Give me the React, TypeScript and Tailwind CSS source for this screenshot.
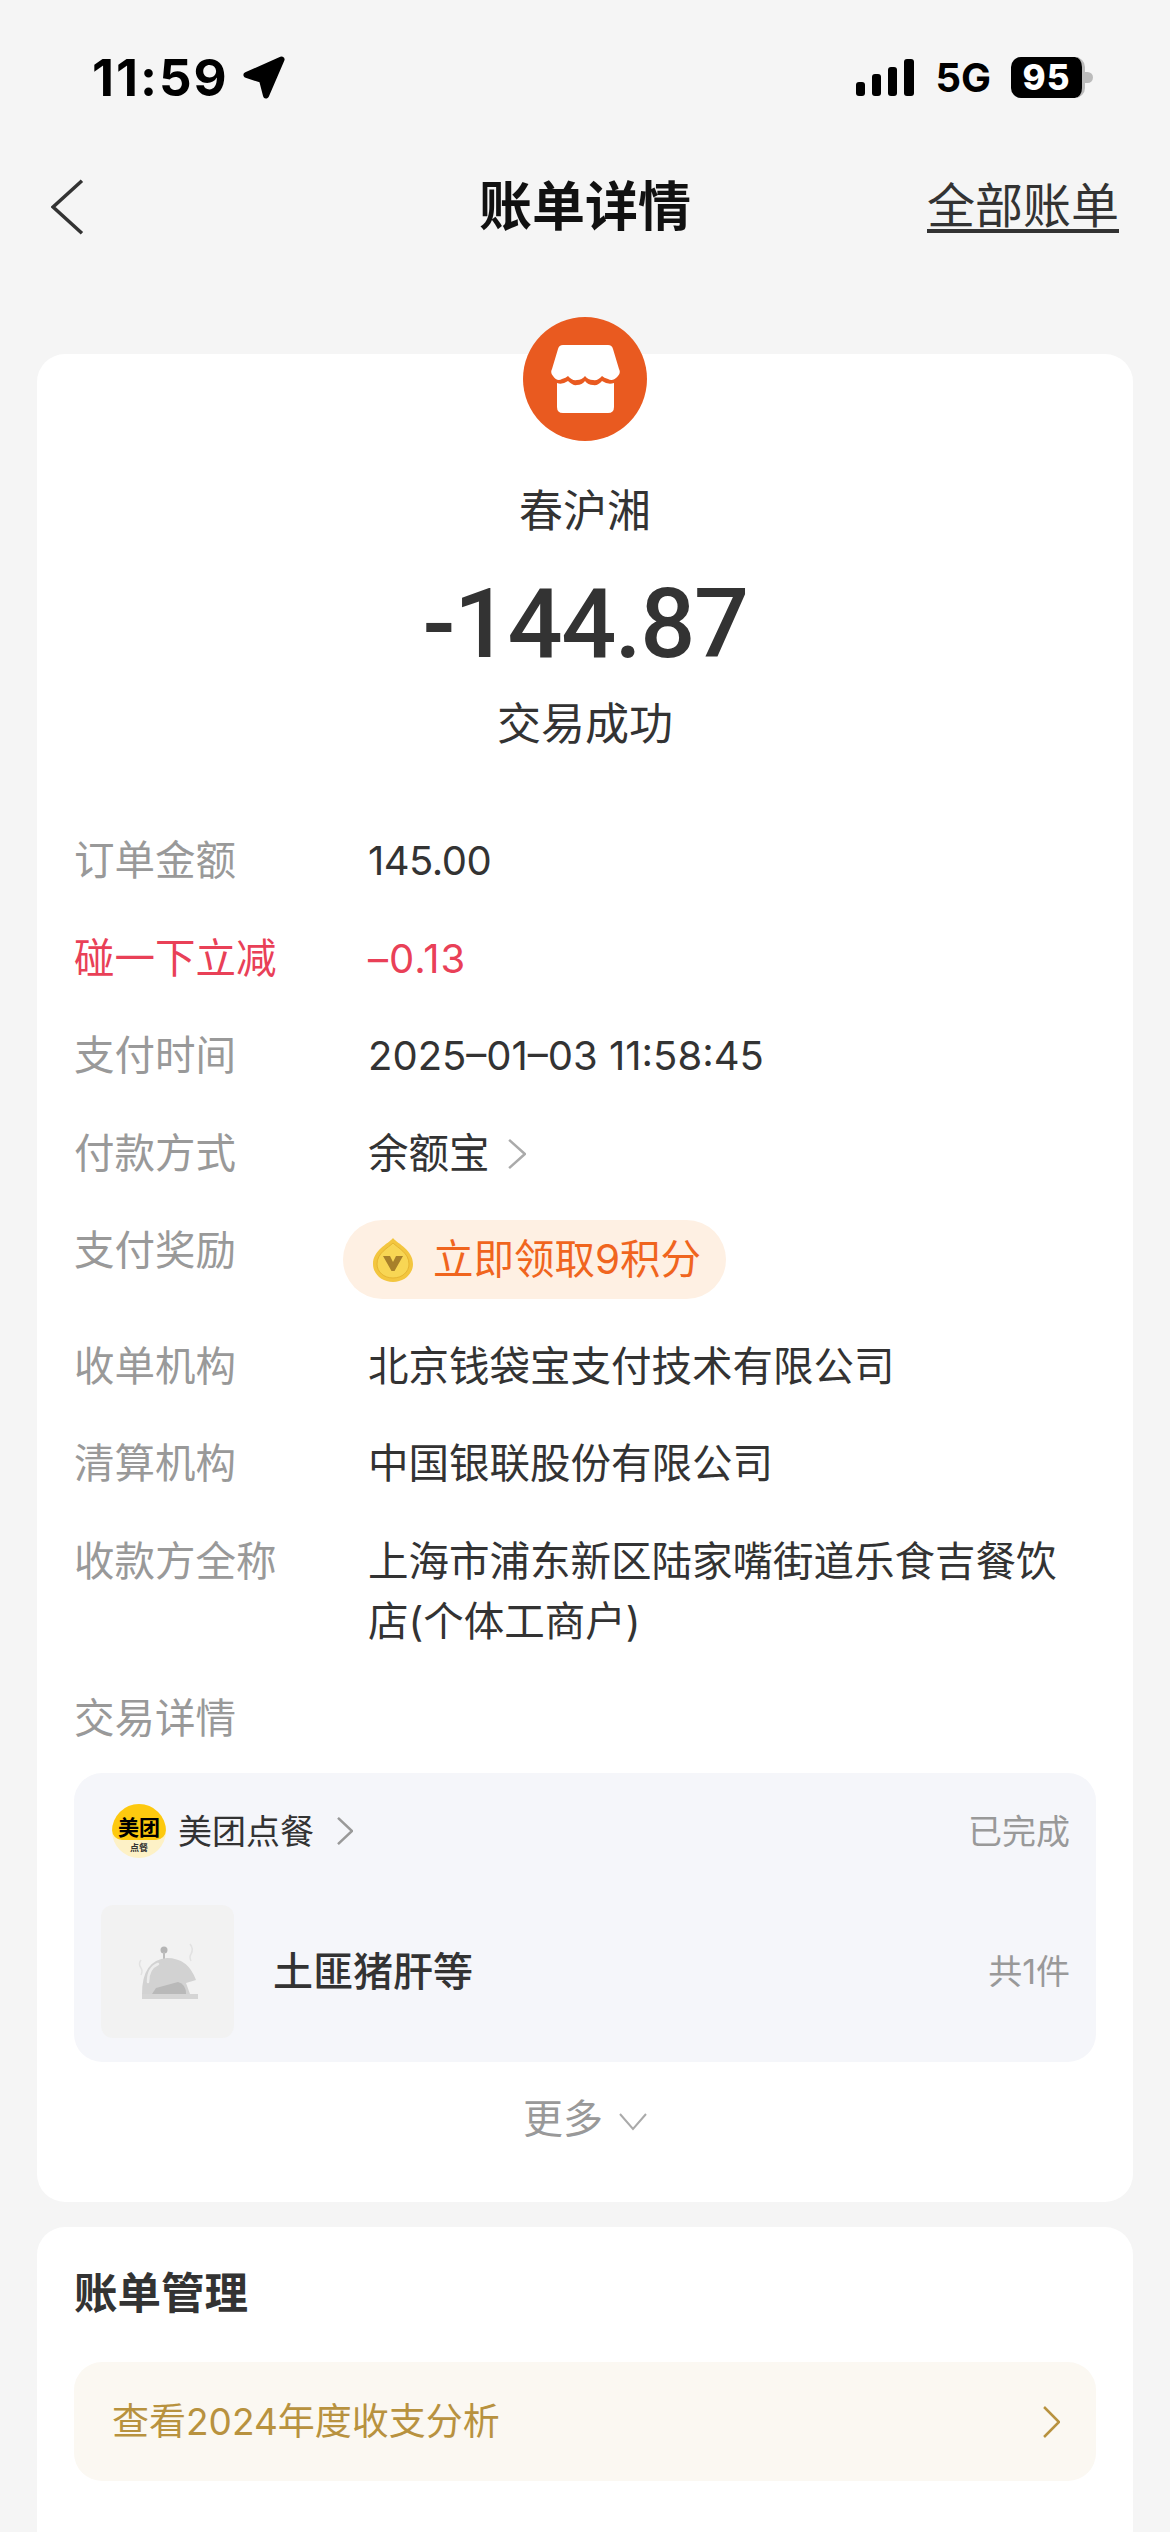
import React from 'react';

const CJK = 'font-["Inter","Noto_Sans_CJK_SC",sans-serif]';

const Chevron: React.FC<{ className?: string; color?: string; width?: number }> = ({ className, color = '#999999', width = 2.5 }) => (
  <svg viewBox="0 0 16 32" preserveAspectRatio="none" className={className} fill="none" stroke={color}>
    <path d="M1 1 L15 16 L1 31" strokeWidth={width} vectorEffect="non-scaling-stroke" />
  </svg>
);

const StatusBar = () => (
  <div className="flex h-[156px] items-center justify-between pl-[92px] pr-[77px] pb-[1px] font-['Inter',sans-serif] text-black">
    <div className="flex items-center gap-[14px]">
      <span className="text-[51px] leading-none font-bold tracking-[2px]">11:59</span>
      <svg viewBox="0 0 42 43" className="h-[43px] w-[42px]" fill="#000" stroke="#000" strokeWidth="6" strokeLinejoin="round">
        <path d="M38.500 3.500 L3.500 19 L19 24 L23 39.500 Z" />
      </svg>
    </div>
    <div className="flex items-center">
      <svg viewBox="0 0 58 37" className="h-[37px] w-[58px]" fill="#000">
        <rect x="0" y="23" width="9" height="14" rx="3" />
        <rect x="16" y="15" width="9" height="22" rx="3" />
        <rect x="32" y="8" width="9" height="29" rx="3" />
        <rect x="48" y="0" width="10" height="37" rx="3" />
      </svg>
      <span className="ml-[21px] text-[40px] leading-none font-bold">5G</span>
      <div className="ml-[20px] flex h-[41px] w-[74px] items-center justify-center rounded-[10px] border-r-[3px] border-[#bbbbbb] bg-black text-[35px] leading-none font-extrabold tracking-[1px] text-white">95</div>
      <div className="h-[11px] w-[8px] rounded-r-full bg-[#bbbbbb]" />
    </div>
  </div>
);

const Row: React.FC<{ label: string; children: React.ReactNode; labelClass?: string }> = ({ label, children, labelClass = 'text-[#999999]' }) => (
  <div className="flex pb-[37.5px] text-[40.5px] leading-[60px]">
    <div className={`w-[294px] shrink-0 ${labelClass}`}>{label}</div>
    <div className="min-w-0 flex-1 pr-[20px] text-[#333333]">{children}</div>
  </div>
);

const StoreBadge = () => (
  <div className="-mt-[37px] flex h-[124px] w-[124px] items-center justify-center rounded-full bg-[#e95a20]">
    <svg viewBox="0 0 69 68" className="h-[68px] w-[69px]" fill="#fff">
      <path d="M12 0 H57 Q61 0 62 4 L68 24 Q70 28 67 31 Q62 37 57 34 Q53 33 51 31 Q47 36 42 35 Q37 35 34 31 Q31 35 26 35 Q21 36 17 31 Q15 33 11 34 Q6 37 2 31 Q-1 28 1 24 L7 4 Q8 0 12 0 Z" />
      <path d="M6 38 Q11 40 17 36 Q22 41 26 40 Q31 40 34 36 Q37 40 42 40 Q47 41 51 36 Q57 40 63 38 V62 Q63 68 57 68 H12 Q6 68 6 62 Z" />
    </svg>
  </div>
);

const Coin = () => (
  <svg viewBox="0 0 40 44" className="h-[44px] w-[40px]">
    <path d="M20 0 C25 6 40 12 40 26 C40 36 31 44 20 44 C9 44 0 36 0 26 C0 12 15 6 20 0 Z" fill="#f3c63f" />
    <path d="M20 5 C25 10 36 15 36 26 C36 34 29 40 20 40 C11 40 4 34 4 26 C4 15 15 10 20 5 Z" fill="#f8d654" stroke="#e6b531" strokeWidth="1" />
    <path d="M10 18 H17 L20 24 L23 18 H30 L21.500 33 H18.500 Z" fill="#a8802a" />
  </svg>
);

const Meituan = () => (
  <div className="flex h-[54px] w-[54px] shrink-0 flex-col items-center overflow-hidden rounded-full bg-[#fdf1c6]">
    <div className="flex h-[36px] w-full items-end justify-center rounded-b-[10px] bg-[#fdc90f] text-[21px] leading-[25px] font-bold text-black">美团</div>
    <div className="mt-[1px] text-[9px] leading-[13px] font-bold text-[#333333]">点餐</div>
  </div>
);

const Cloche = () => (
  <svg viewBox="0 0 64 64" className="h-[64px] w-[64px]">
    <path d="M5 20 Q2 24 5 28 Q7 31 5 35 M54 4 Q58 9 55 14 Q53 17 55 21" fill="none" stroke="#e2e2e2" strokeWidth="1.500" />
    <circle cx="28" cy="10" r="3.500" fill="#b5b5b5" />
    <rect x="27" y="12" width="2" height="7" fill="#bdbdbd" />
    <path d="M6 54 Q6 20 31 18 Q52 18 60 40 L50 43 L54 54 Z" fill="#d2d2d2" />
    <path d="M12 42 Q12 28 22 24" fill="none" stroke="#ececec" strokeWidth="2.500" strokeLinecap="round" />
    <path d="M16 54 L20 48 L42 42 Q50 44 50 54 Z" fill="#b9b9b9" />
    <rect x="6" y="54" width="56" height="5" fill="#d5d5d5" />
  </svg>
);

export default function App() {
  return (
    <div className={`h-[2532px] w-[1170px] overflow-hidden bg-[#f5f5f5] ${CJK}`}>
      <StatusBar />

      <div className="grid h-[102px] grid-cols-[1fr_auto_1fr] items-center pl-[51px] pr-[51px]">
        <Chevron className="h-[56px] w-[33px] -scale-x-100" color="#333333" width={3.5} />
        <div className="text-[53px] leading-none font-bold text-[#111111]">账单详情</div>
        <div className="mt-[2px] justify-self-end border-b-[4px] border-[#333333] text-[48px] leading-[46px] text-[#333333]">全部账单</div>
      </div>

      <section className="mx-[37px] mt-[96px] flex h-[1848px] flex-col rounded-[28px] bg-white px-[37px]">
        <div className="flex flex-col items-center">
          <StoreBadge />
          <div className="mt-[40px] text-[44px] leading-[60px] text-[#333333]">春沪湘</div>
          <div className="mt-[33px] h-[100px] font-['Roboto',sans-serif] text-[97px] leading-[100px] font-medium tracking-[-1.5px] text-[#333333]">-144.87</div>
          <div className="mt-[20px] text-[44px] leading-[60px] text-[#333333]">交易成功</div>
        </div>

        <div className="mt-[77px]">
          <Row label="订单金额">
            <span className="text-[40px] tracking-[-0.5px]">145.00</span>
          </Row>
          <Row label="碰一下立减" labelClass="text-[#e94057]">
            <span className="text-[40px] tracking-[1px] text-[#e94057]">–0.13</span>
          </Row>
          <Row label="支付时间">
            <span className="text-[40px]">2025–01–03 11:58:45</span>
          </Row>
          <Row label="付款方式">
            <div className="flex items-center gap-[18px]">
              余额宝
              <Chevron className="h-[30px] w-[18px]" color="#aaaaaa" width={2.5} />
            </div>
          </Row>
          <Row label="支付奖励">
            <div className="-ml-[25px] -mt-[1px] flex h-[79px] w-[383px] items-center rounded-full bg-[#fef0e3] pl-[30px] text-[#f0651e]">
              <Coin />
              <span className="ml-[20px]">立即领取9积分</span>
            </div>
          </Row>
          <Row label="收单机构">北京钱袋宝支付技术有限公司</Row>
          <Row label="清算机构">中国银联股份有限公司</Row>
          <Row label="收款方全称">上海市浦东新区陆家嘴街道乐食吉餐饮店(个体工商户)</Row>
        </div>

        <div className="text-[40.5px] leading-[60px] text-[#999999]">交易详情</div>

        <div className="mt-[24px] h-[289px] rounded-[28px] bg-[#f5f6fa] pl-[27px] pr-[26px] pt-[31px]">
          <div className="flex h-[54px] items-center">
            <div className="ml-[11px]"><Meituan /></div>
            <span className="ml-[12px] text-[34px] text-[#333333]">美团点餐</span>
            <Chevron className="ml-[23px] h-[28px] w-[16px]" color="#999999" width={2.5} />
            <span className="ml-auto text-[34px] text-[#999999]">已完成</span>
          </div>
          <div className="mt-[47px] flex items-center">
            <div className="flex h-[133px] w-[133px] items-center justify-center rounded-[12px] bg-[#f2f2f2]">
              <Cloche />
            </div>
            <span className="ml-[39px] text-[40px] font-medium text-[#333333]">土匪猪肝等</span>
            <span className="ml-auto text-[34px] text-[#999999]">共1件</span>
          </div>
        </div>

        <div className="mt-[27px] flex items-center justify-center gap-[16px] text-[40px] leading-[60px] text-[#999999]">
          更多
          <svg viewBox="0 0 28 18" className="mt-[6px] h-[18px] w-[28px]" fill="none" stroke="#aaaaaa" strokeWidth="2">
            <path d="M1 1 L14 16 L27 1" />
          </svg>
        </div>
      </section>

      <section className="mx-[37px] mt-[25px] h-[400px] rounded-t-[28px] bg-white px-[37px] pt-[36px]">
        <div className="text-[43.5px] leading-[60px] font-bold text-[#333333]">账单管理</div>
        <div className="mt-[39px] flex h-[119px] items-center justify-between rounded-[28px] bg-[#fbf8f2] pl-[38px] pr-[36px]">
          <span className="text-[37px] text-[#b8923f]">查看2024年度收支分析</span>
          <Chevron className="h-[32px] w-[17px]" color="#b8923f" width={2.5} />
        </div>
      </section>
    </div>
  );
}
